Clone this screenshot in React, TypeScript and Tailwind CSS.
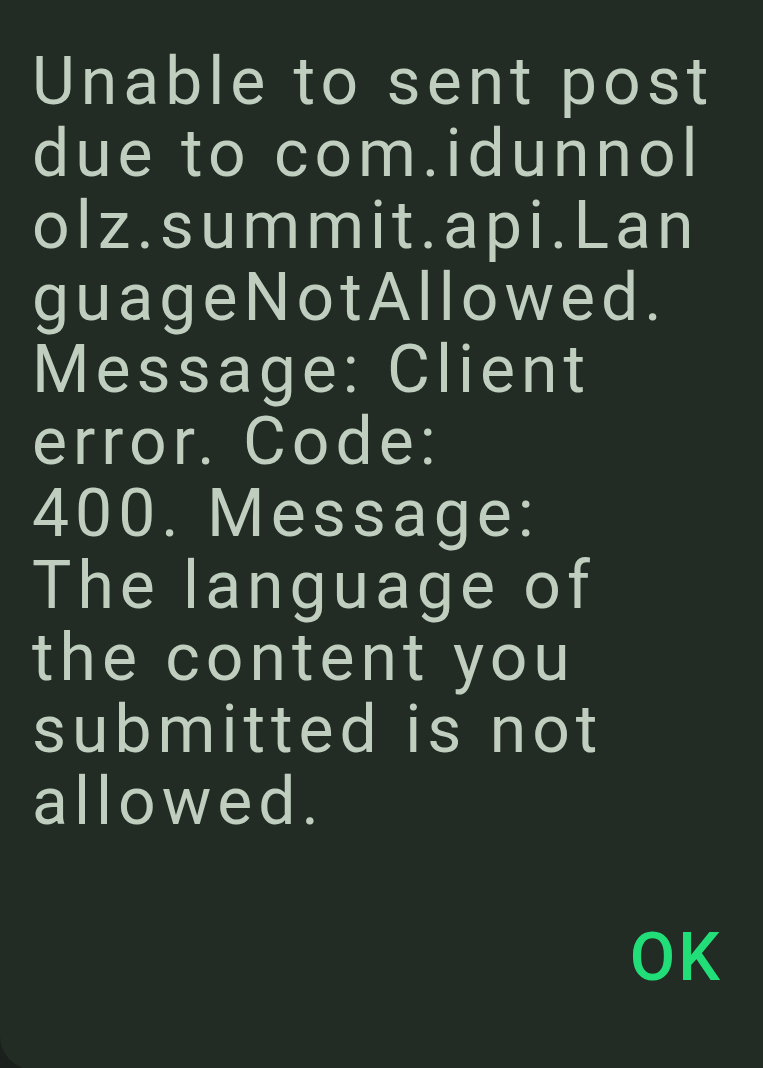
const lines = [
    'Unable to sent post',
    'due to com.idunnol',
    'olz.summit.api.Lan',
    'guageNotAllowed.',
    'Message: Client',
    'error. Code:',
    '400. Message:',
    'The language of',
    'the content you',
    'submitted is not',
    'allowed.',
];

export default function App() {
    return (
        <div className="h-[1068px] w-[763px] overflow-hidden bg-[#1a201b]">
            <div
                className="flex h-[1070px] flex-col rounded-bl-[34px] bg-[#222b24] pl-[32px] pr-[40px] pt-[46px]"
                style={{ fontFamily: 'Roboto, "Noto Sans", sans-serif' }}
            >
                {/* message body */}
                <div className="text-[66px] leading-[72px] tracking-[6px] text-[#bfcebf]">
                    {lines.map((line, i) => (
                        <div key={i} className="whitespace-nowrap">
                            {line}
                        </div>
                    ))}
                </div>

                {/* actions */}
                <div className="mt-[84px] flex justify-end">
                    <button className="text-[66px] font-medium leading-[72px] tracking-[3px] text-[#22de78]">
                        OK
                    </button>
                </div>
            </div>
        </div>
    );
}
